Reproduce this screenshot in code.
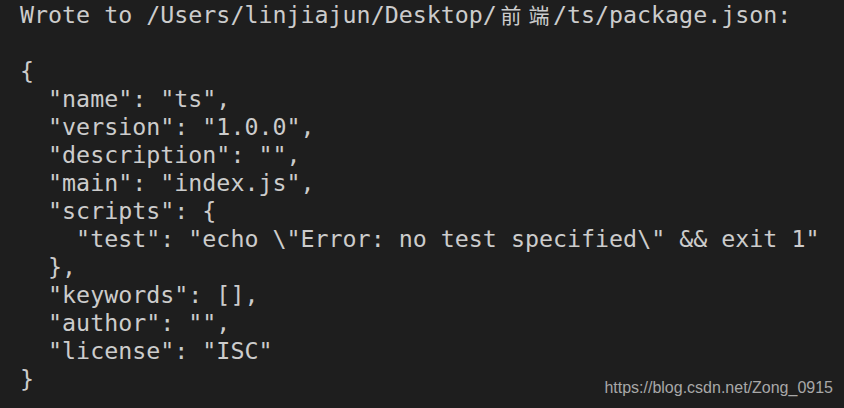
const lines = [
  '',
  '{',
  '  "name": "ts",',
  '  "version": "1.0.0",',
  '  "description": "",',
  '  "main": "index.js",',
  '  "scripts": {',
  '    "test": "echo \\"Error: no test specified\\" && exit 1"',
  '  },',
  '  "keywords": [],',
  '  "author": "",',
  '  "license": "ISC"',
  '}',
];

const Cjk = ({ ch }: { ch: string }) => (
  <span className="inline-block w-[28px] text-center font-['Noto_Sans_CJK_SC',sans-serif] text-[21px]">{ch}</span>
);

const App = () => {
  return (
    <div className="relative w-[844px] h-[408px] overflow-hidden bg-[#1e1e1e] text-[#cccccc]">
      <pre className="pl-[20px] font-['DejaVu_Sans_Mono',monospace] text-[23.3px] leading-[28px] whitespace-pre">
        <div>
          Wrote to /Users/linjiajun/Desktop/<Cjk ch="前" /><Cjk ch="端" />/ts/package.json:
        </div>
        {lines.map((l, i) => (
          <div key={i} className="h-[28px]">{l}</div>
        ))}
      </pre>

      {/* csdn watermark */}
      <div className="absolute right-[11px] bottom-[8px] font-['Liberation_Sans',Arial,sans-serif] text-[16px] text-[#a8a8a8]">
        https://blog.csdn.net/Zong_0915
      </div>
    </div>
  );
};

export default App;
